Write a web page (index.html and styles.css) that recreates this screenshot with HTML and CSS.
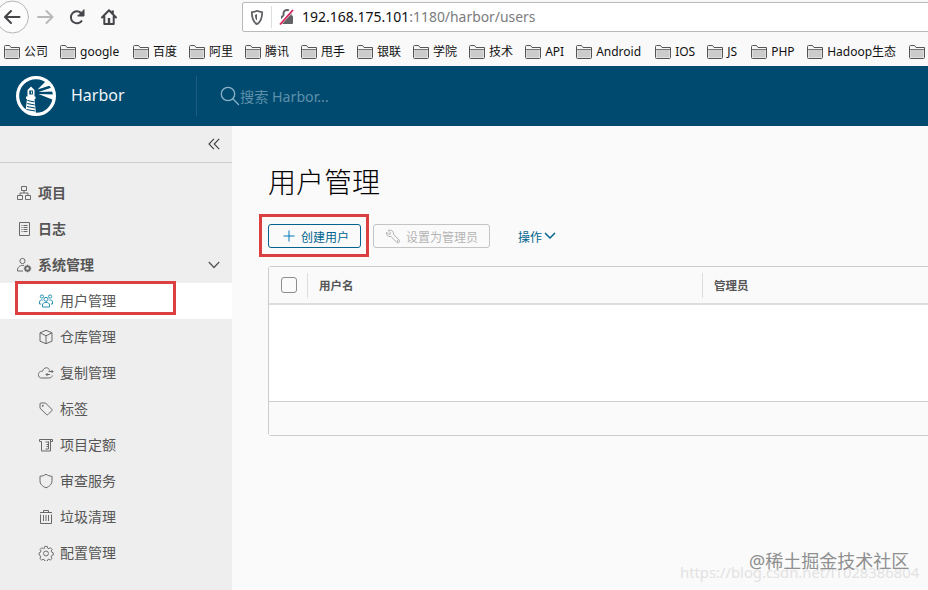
FILE: index.html
```html
<!DOCTYPE html>
<html lang="zh-CN">
<head>
  <meta charset="utf-8">
  <title>Harbor</title>
  <link rel="stylesheet" href="styles.css">
</head>
<body>
  <!-- shared shapes -->
  <svg class="defs" width="0" height="0">
    <symbol id="folder" viewBox="0 0 16 14">
      <path d="M.5 12.500v-11q0-1 1-1h4l1.500 2h8.500v10q0 1-1 1h-13q-1 0-1-1z" fill="#f4f4f4" stroke="#555"/>
      <path d="M1.500 5h13v7.500h-13z" fill="#cbcbcb"/>
      <path d="M1 4.500h14" stroke="#777"/>
    </symbol>
  </svg>

  <div class="browser">
    <div class="toolbar">
      <div class="nav-buttons">
        <svg width="120" height="34" viewBox="0 0 120 34" fill="none" stroke="#45454a" stroke-width="2" stroke-linecap="round" stroke-linejoin="round">
          <circle cx="12.500" cy="17" r="16" fill="#fcfcfc" stroke="#b5b5b7" stroke-width="1"/>
          <path d="M19.500 17H5.500M11 11l-6 6 6 6"/>
          <path d="M38 17h14M46.500 11l6 6-6 6" stroke="#b9b9bb"/>
          <path d="M82 20.500a6 6 0 1 1-.5-7" stroke-linecap="butt"/>
          <path d="M84 10v6h-6z" fill="#45454a" stroke-width="1"/>
          <path d="M102 17.500l7-7.200 7 7.200M104.300 16.500v7.500h9.400v-7.500"/>
          <path d="M109 18v5M112.700 10.500v3" stroke-width="2.400" stroke-linecap="butt"/>
        </svg>
      </div>
      <div class="urlbar">
        <svg width="52" height="28" viewBox="0 0 52 28" fill="none">
          <path d="M14 7.800c-2 1-3.500 1.200-5.200 1.300 0 6 .8 9.700 5.200 12 4.400-2.300 5.200-6 5.200-12-1.700-.1-3.200-.3-5.200-1.300z" stroke="#626266" stroke-width="1.800" stroke-linejoin="round"/>
          <path d="M14 11v6.500c-1.600-1.200-2-3-2.100-5.500z" fill="#626266"/>
          <path d="M28.500 3v22" stroke="#ddd"/>
          <path d="M40.500 13v-2.500a3.500 3.500 0 0 1 7 0V13" stroke="#626266" stroke-width="2"/>
          <rect x="38" y="12.500" width="12" height="8.500" rx="1" fill="#626266"/>
          <path d="M36.500 21l13-14.500" stroke="#fff" stroke-width="4"/>
          <path d="M37 21.500L50 7" stroke="#d51e58" stroke-width="1.800"/>
        </svg>
        <span class="host">192.168.175.101</span><span class="path">:1180/harbor/users</span>
      </div>
    </div>
    <div class="bookmarks">
      <div class="bookmark"><svg><use href="#folder"/></svg><span>公司</span></div>
      <div class="bookmark"><svg><use href="#folder"/></svg><span class="w-google">google</span></div>
      <div class="bookmark"><svg><use href="#folder"/></svg><span>百度</span></div>
      <div class="bookmark"><svg><use href="#folder"/></svg><span>阿里</span></div>
      <div class="bookmark"><svg><use href="#folder"/></svg><span>腾讯</span></div>
      <div class="bookmark"><svg><use href="#folder"/></svg><span>甩手</span></div>
      <div class="bookmark"><svg><use href="#folder"/></svg><span>银联</span></div>
      <div class="bookmark"><svg><use href="#folder"/></svg><span>学院</span></div>
      <div class="bookmark"><svg><use href="#folder"/></svg><span>技术</span></div>
      <div class="bookmark"><svg><use href="#folder"/></svg><span class="w-api">API</span></div>
      <div class="bookmark"><svg><use href="#folder"/></svg><span class="w-android">Android</span></div>
      <div class="bookmark"><svg><use href="#folder"/></svg><span class="w-ios">IOS</span></div>
      <div class="bookmark"><svg><use href="#folder"/></svg><span class="w-js">JS</span></div>
      <div class="bookmark"><svg><use href="#folder"/></svg><span class="w-php">PHP</span></div>
      <div class="bookmark"><svg><use href="#folder"/></svg><span class="w-hadoop">Hadoop生态</span></div>
      <div class="bookmark"><svg><use href="#folder"/></svg></div>
    </div>
  </div>

  <header class="header">
    <div class="branding">
      <svg width="40" height="40" viewBox="0 0 40 40">
        <circle cx="20" cy="20" r="18.400" fill="none" stroke="#fff" stroke-width="3.200"/>
        <path d="M11.500 14l3.500-3.500 3.500 3.500v6.500h1v2.500h-1l1.500 15c-4 1-7 0-10.500-3l1.500-12h-1v-2.500h1.500z" fill="#fff"/>
        <path d="M13.300 14.500h3.600v4h-3.600z" fill="#004a70"/>
        <path d="M15.500 15.500v2" stroke="#fff"/>
        <path d="M11.500 24.500l7 1.500M11.200 27.500l7.600 1.500M11 30.500l8 1.500M10.500 33.500l8.700 1.500" stroke="#004a70" stroke-width="1.200"/>
        <path d="M21.500 13.500L30 5l4 4.500zM22.500 16l13.500-4.500 2 4zM22.500 18l16 .5-1 5.500z" fill="#fff"/>
      </svg>
      <span class="product">Harbor</span>
    </div>
    <div class="search">
      <svg width="20" height="20" viewBox="0 0 20 20" fill="none" stroke="#8cb4c8" stroke-width="1.300" stroke-linecap="round"><circle cx="8" cy="8" r="6.700"/><path d="M13 13l5.500 5.500"/></svg>
      <span>搜索 Harbor...</span>
    </div>
  </header>

  <div class="container">
    <nav class="sidenav">
      <div class="collapse">
        <svg width="12" height="12" viewBox="0 0 12 12" fill="none" stroke="#444" stroke-width="1.200"><path d="M6 .8L1 6l5 5.200M11.200.8l-5 5.200 5 5.200"/></svg>
      </div>
      <div class="nav-list">
        <div class="nav-item top">
          <svg class="icon" viewBox="0 0 16 16"><path d="M5.500 1.500h5v4h-5zM1.500 10.500h5v4h-5zM9.500 10.500h5v4h-5zM8 5.500V8M4 10.500V8h8v2.500"/></svg>
          <span>项目</span>
        </div>
        <div class="nav-item top">
          <svg class="icon" viewBox="0 0 16 16"><path d="M3.500 1.500h10v13h-10zM5.500 4.500h1M7.500 4.500h4M5.500 6.500h1M7.500 6.500h4M5.500 8.500h1M7.500 8.500h4M5.500 10.500h1M7.500 10.500h4"/></svg>
          <span>日志</span>
        </div>
        <div class="nav-item top">
          <svg class="icon" viewBox="0 0 16 16"><circle cx="6.500" cy="4" r="2.600"/><path d="M8 8.500c-3-.6-6.300.8-6.500 4.500v1H7"/><circle cx="11.500" cy="11.500" r="2.200" stroke-width="1.800"/><path d="M11.500 7.800v1.500M11.500 13.700v1.500M7.800 11.500h1.500M13.700 11.500h1.500M8.900 8.900l1 1M13.100 13.100l1 1M14.100 8.900l-1 1M9.900 13.100l-1 1" stroke-width="1.400"/></svg>
          <span>系统管理</span>
          <svg class="caret" width="12" height="8" viewBox="0 0 12 8" fill="none" stroke="#555" stroke-width="1.300"><path d="M.8 1L6 6.500 11.200 1"/></svg>
        </div>
        <div class="nav-item active">
          <svg class="icon" viewBox="0 0 16 16"><circle cx="8" cy="6.300" r="2"/><circle cx="3.900" cy="3.500" r="1.600"/><circle cx="12.100" cy="3.500" r="1.600"/><path d="M4.500 14v-2c0-3.500 7-3.500 7 0v2zM4.700 7.200C2.700 6.500 1.700 7.500 1.500 9v2h1.700M11.300 7.200c2-.7 3 .3 3.200 1.800v2h-1.700"/></svg>
          <span>用户管理</span>
          <div class="mark mark-nav"></div>
        </div>
        <div class="nav-item">
          <svg class="icon" viewBox="0 0 16 16"><path d="M8 1.300l6 2.500v8.400l-6 2.500-6-2.500V3.800zM2 3.800l6 3 6-3M8 6.800v7.900"/></svg>
          <span>仓库管理</span>
        </div>
        <div class="nav-item">
          <svg class="icon" viewBox="0 0 16 16"><path d="M11.500 5.500C11 2 5.800 1.500 4.600 6.200 1.500 6-.5 8.500.6 11c.7 1.700 1.700 2 3 2h7.200c2 0 3.200-1 3.500-2.500M10.500 6.500H15M13.500 5L15 6.500 13.500 8M12 9.500H8M9.500 8L8 9.500 9.500 11"/></svg>
          <span>复制管理</span>
        </div>
        <div class="nav-item">
          <svg class="icon" viewBox="0 0 16 16"><path d="M2 3q0-1 1-1h4.500l6.300 6.300q.7.700 0 1.400L9.900 13.600q-.7.700-1.400 0L2 7.200z"/><circle cx="4.800" cy="4.800" r=".6"/></svg>
          <span>标签</span>
        </div>
        <div class="nav-item">
          <svg class="icon" viewBox="0 0 16 16"><path d="M1.500 2.500h13v2h-2M1.500 2.500v2h2v9.500h9V2.500M10.500 4.500v7.500M10.500 5h-3M10.500 7.500H8.500M10.500 9.500h-2M10.500 12h-3"/></svg>
          <span>项目定额</span>
        </div>
        <div class="nav-item">
          <svg class="icon" viewBox="0 0 16 16"><path d="M8 1.200c1.800 1.400 3.800 2 6 2v4.600c0 3.500-2.500 5.600-6 7-3.500-1.400-6-3.500-6-7V3.200c2.200 0 4.200-.6 6-2z"/></svg>
          <span>审查服务</span>
        </div>
        <div class="nav-item">
          <svg class="icon" viewBox="0 0 16 16"><path d="M2 3.500h12M5.500 3.500v-2h5v2M2.500 5.500v9h11v-9M5.500 6v6M8 6v6M10.500 6v6"/></svg>
          <span>垃圾清理</span>
        </div>
        <div class="nav-item">
          <svg class="icon" viewBox="0 0 17 17"><path d="M7.200 1.500h2.600l.5 1.900 1.300.5 1.700-1 1.800 1.900-1 1.600.5 1.300 1.600.6v2.400l-1.700.6-.5 1.300.9 1.700-1.800 1.700-1.600-.9-1.200.5-.5 1.700H7.200l-.5-1.700-1.300-.5-1.600.9L2 14.300l.9-1.700-.5-1.300-1.200-.6V8.300l1.500-.6.5-1.300-1-1.600L4 2.900l1.700 1 1.200-.5z" stroke-linejoin="round"/><circle cx="8.500" cy="9" r="2.600"/></svg>
          <span>配置管理</span>
        </div>
      </div>
    </nav>

    <main class="content">
      <h2>用户管理</h2>
      <div class="actions">
        <div class="btn primary">
          <svg width="12" height="12" viewBox="0 0 12 12" fill="none" stroke="#0079b8"><path d="M6 .5v11M.5 6h11"/></svg>
          <span>创建用户</span>
          <div class="mark mark-btn"></div>
        </div>
        <div class="btn disabled">
          <svg width="15" height="15" viewBox="0 0 16 16" fill="none" stroke="#aaa" stroke-linejoin="round"><path d="M2.300 1.500l2.500 2.600-.5 1.300-1.400.3L.7 3.400C0 6 2 8.700 5.300 7.900l6.200 6.400c1.700 1.500 4-.7 2.500-2.500L7.800 5.400C8.500 2.500 5.500.3 2.300 1.500z"/><circle cx="12.500" cy="12.800" r=".5"/></svg>
          <span>设置为管理员</span>
        </div>
        <div class="dropdown">
          <span>操作</span>
          <svg width="12" height="8" viewBox="0 0 12 8" fill="none" stroke="#00648f" stroke-width="1.500"><path d="M1 1l5 5 5-5"/></svg>
        </div>
      </div>
      <div class="datagrid">
        <div class="grid-head">
          <div class="cell check"><span class="checkbox"></span></div>
          <div class="cell name">用户名</div>
          <div class="cell admin">管理员</div>
        </div>
        <div class="grid-body"></div>
        <div class="grid-foot"></div>
      </div>
    </main>
  </div>

  <div class="watermark url">https://blog.csdn.net/l1028386804</div>
  <div class="watermark site">@稀土掘金技术社区</div>
</body>
</html>
```
FILE: styles.css
```css
* {
  box-sizing: border-box;
}
html, body {
  margin: 0;
  width: 928px;
  height: 590px;
  overflow: hidden;
  background: #fafafa;
  color: #565656;
  font-family: "Noto Sans", "Noto Sans CJK SC", sans-serif;
}
body {
  position: relative;
}
svg {
  display: block;
  flex: none;
}
.defs {
  position: absolute;
}

/* Browser bars */
.browser {
  height: 66px;
  background: #f9f9fa;
}
.toolbar {
  display: flex;
  height: 37px;
}
.nav-buttons {
  flex: none;
  width: 242px;
}
.urlbar {
  display: flex;
  align-items: center;
  flex: none;
  width: 700px;
  height: 30px;
  margin-top: 2px;
  background: #fff;
  border: 1px solid #b9b9bb;
  border-radius: 2px;
  font-size: 14px;
  white-space: nowrap;
}
.urlbar span {
  margin-top: -2px;
}
.urlbar .host {
  margin-left: 7px;
  color: #111;
}
.path {
  font-size: 13.900px;
  color: #7b7b7d;
}
.bookmarks {
  display: flex;
  gap: 12px;
  height: 29px;
  padding-left: 4px;
  align-items: center;
  font-size: 12px;
  color: #111;
}
.bookmark {
  display: flex;
  align-items: center;
  gap: 4px;
  flex: none;
  white-space: nowrap;
}
.bookmark svg {
  width: 16px;
  height: 14px;
}
.bookmark span {
  line-height: 18px;
}
.w-google { width: 41px; }
.w-api { width: 19px; }
.w-android { width: 47px; }
.w-ios { width: 20px; }
.w-js { width: 12px; }
.w-php { width: 24px; }
.w-hadoop { width: 70px; }

/* Harbor header */
.header {
  display: flex;
  align-items: center;
  height: 60px;
  background: #004a70;
}
.branding {
  display: flex;
  align-items: center;
  width: 197px;
  height: 40px;
  padding-left: 16px;
  border-right: 1px solid #1d5e80;
}
.product {
  margin: -2px 0 0 15px;
  font-size: 16px;
  color: #f0f5f8;
}
.search {
  display: flex;
  align-items: center;
  padding-left: 23px;
  font-size: 14.200px;
  color: #5d90aa;
}

/* Side navigation */
.container {
  display: flex;
  height: 464px;
}
.sidenav {
  flex: none;
  width: 232px;
  background: #eee;
}
.collapse {
  display: flex;
  align-items: center;
  justify-content: flex-end;
  height: 37px;
  padding-right: 12px;
  border-bottom: 1px solid #ccc;
}
.nav-list {
  padding-top: 12px;
}
.nav-item {
  position: relative;
  display: flex;
  align-items: center;
  gap: 6px;
  height: 36px;
  padding-left: 38px;
  font-size: 14px;
  line-height: 20px;
}
.nav-item.top {
  padding-left: 16px;
  font-weight: 600;
}
.nav-item.active {
  background: #fff;
}
.icon {
  width: 16px;
  height: 16px;
  fill: none;
  stroke: #696969;
  stroke-width: 1;
}
.active .icon {
  stroke: #2a90b4;
}
.caret {
  margin-left: auto;
  margin-right: 12px;
}

/* Highlight frames */
.mark {
  position: absolute;
  border: 3px solid #dc3f40;
}
.mark-nav {
  left: 15px;
  top: -2px;
  width: 161px;
  height: 34px;
}
.mark-btn {
  left: -10px;
  top: -11px;
  width: 110px;
  height: 43px;
}

/* Main content */
.content {
  flex: 1;
  min-width: 0;
  padding: 35px 0 0 36px;
}
.content h2 {
  margin: 0;
  height: 40px;
  font-size: 28px;
  line-height: 40px;
  font-weight: 300;
  color: #000;
  font-family: "Noto Sans CJK SC", sans-serif;
}
.actions {
  display: flex;
  align-items: center;
  margin-top: 23px;
  height: 24px;
  font-size: 12px;
}
.btn {
  position: relative;
  display: flex;
  align-items: center;
  height: 24px;
  border: 1px solid #00648f;
  border-radius: 3px;
  white-space: nowrap;
}
.btn span {
  padding-top: 1px;
}
.btn.primary {
  width: 93px;
  padding-left: 14px;
  gap: 6px;
  color: #00648f;
}
.btn.disabled {
  width: 117px;
  margin-left: 12px;
  padding-left: 12px;
  gap: 5px;
  border-color: #c4c4c4;
  color: #b4b4b4;
}
.dropdown {
  display: flex;
  align-items: center;
  gap: 2px;
  margin-left: 28px;
  color: #00648f;
}
.dropdown span {
  padding-top: 2px;
}

.datagrid {
  width: 700px;
  height: 170px;
  margin-top: 18px;
  border: 1px solid #ccc;
  border-radius: 3px;
  background: #fff;
}
.grid-head {
  display: flex;
  align-items: center;
  height: 38px;
  border-bottom: 2px solid #ddd;
  background: #fafafa;
  font-size: 11.500px;
  font-weight: 600;
}
.cell {
  display: flex;
  align-items: center;
  height: 25px;
}
.cell.check {
  width: 39px;
  padding-left: 12px;
  border-right: 1px solid #ddd;
}
.cell.name {
  width: 395px;
  padding-left: 11px;
  border-right: 1px solid #ddd;
}
.cell.admin {
  padding-left: 11px;
}
.checkbox {
  width: 16px;
  height: 16px;
  border: 1px solid #8c8c8c;
  border-radius: 3px;
}
.grid-body {
  height: 96px;
}
.grid-foot {
  height: 34px;
  border-top: 1px solid #ccc;
  background: #fafafa;
}

/* Watermarks */
.watermark {
  position: absolute;
  white-space: nowrap;
}
.watermark.url {
  left: 680px;
  top: 562px;
  font-size: 14.800px;
  line-height: 20px;
  color: #e2e2e2;
}
.watermark.site {
  left: 749px;
  top: 549px;
  font-size: 18px;
  line-height: 24px;
  color: #8f8f8f;
}
```
